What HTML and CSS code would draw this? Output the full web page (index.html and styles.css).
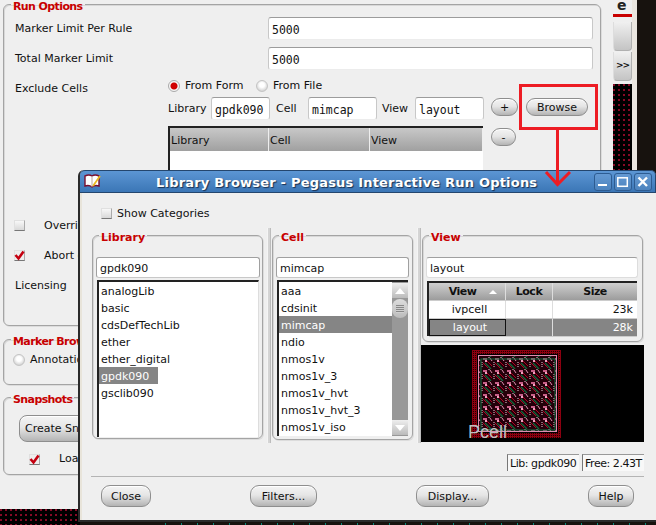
FILE: index.html
```html
<!DOCTYPE html>
<html lang="en">
<head>
<meta charset="utf-8">
<title>Library Browser</title>
<link rel="stylesheet" href="styles.css">
</head>
<body>
<div class="desktop">
  <div class="side-strip">
    <div class="side-title"><span class="side-e">e</span></div>
    <div class="side-btn side-btn-top"></div>
    <div class="side-btn">&gt;&gt;</div>
    <div class="dots side-dots"></div>
  </div>
  <div class="side-gap"></div>

  <div class="dots bottom-dots"></div>
  <div class="bottom-strip"></div>

  <main class="back-window">
    <fieldset class="group run-options">
      <legend>Run Options</legend>
      <div class="limit-row"><label class="limit-label">Marker Limit Per Rule</label><div class="input mono grow">5000</div></div>
      <div class="limit-row"><label class="limit-label">Total Marker Limit</label><div class="input mono grow">5000</div></div>
      <div class="exclude">
        <div class="exclude-label">Exclude Cells</div>
        <div class="exclude-body">
          <div class="radio-row">
            <span class="radio on"></span><span class="radio-text">From Form</span>
            <span class="radio"></span><span>From File</span>
          </div>
          <div class="lcv-row">
            <span class="lab-lib">Library</span><div class="input mono w-lib">gpdk090</div>
            <span class="lab-cell">Cell</span><div class="input mono w-cv">mimcap</div>
            <span class="lab-view">View</span><div class="input mono w-cv">layout</div>
            <button class="pill small plus">+</button>
            <button class="pill small browse">Browse</button>
          </div>
          <div class="table-row">
            <div class="ex-table">
              <div class="ex-head"><span class="c1">Library</span><span class="c2">Cell</span><span class="c3">View</span></div>
            </div>
            <button class="pill small minus">-</button>
          </div>
        </div>
      </div>
      <div class="opt-row"><span class="check"></span><span>Overriding</span></div>
      <div class="opt-row"><span class="check checked"><svg viewBox="0 0 11 11" width="11" height="11"><path d="M1.5 5 L4.5 8.5 L9.5 1.5" fill="none" stroke="#c40010" stroke-width="2.6"/></svg></span><span>Abort on</span></div>
      <div class="opt-row plain"><span>Licensing</span></div>
    </fieldset>
    <fieldset class="group marker">
      <legend>Marker Browser</legend>
      <div class="annot-row"><span class="radio"></span><span>Annotation</span></div>
    </fieldset>
    <fieldset class="group snapshots">
      <legend>Snapshots</legend>
      <button class="pill create">Create Snapshot</button>
      <div class="load-row"><span class="check checked"><svg viewBox="0 0 11 11" width="11" height="11"><path d="M1.5 5 L4.5 8.5 L9.5 1.5" fill="none" stroke="#c40010" stroke-width="2.6"/></svg></span><span>Load</span></div>
    </fieldset>
  </main>

  <section class="dialog">
    <header class="titlebar">
      <svg class="book" viewBox="0 0 17 15" width="17" height="15">
        <path d="M1 2 Q5 0 8 2 Q11 0 15 2 V12 Q11 10.500 8 13 Q5 10.500 1 12 Z" fill="#fff" stroke="#7a1030" stroke-width="1.400"/>
        <path d="M8 2 V13" stroke="#b8a8a0" stroke-width="1"/>
        <path d="M16 2 L9 12" stroke="#e8b820" stroke-width="1.800"/>
      </svg>
      <h1>Library Browser - Pegasus Interactive Run Options</h1>
      <div class="win-btns">
        <span class="win-btn"><svg viewBox="0 0 18 18" width="18" height="18"><rect x="4" y="11" width="9" height="2" fill="#fff"/></svg></span>
        <span class="win-btn"><svg viewBox="0 0 18 18" width="18" height="18"><rect x="3.800" y="4.800" width="9.500" height="8.500" fill="none" stroke="#fff" stroke-width="1.500"/></svg></span>
        <span class="win-btn"><svg viewBox="0 0 18 18" width="18" height="18"><path d="M4.500 4.500 L13 13 M13 4.500 L4.500 13" stroke="#fff" stroke-width="2.400"/></svg></span>
      </div>
    </header>
    <div class="dialog-body">
      <div class="show-cat"><span class="check"></span><span>Show Categories</span></div>
      <div class="panes">
        <fieldset class="group lib-pane">
          <legend>Library</legend>
          <div class="input pane-input lib-input">gpdk090</div>
          <ul class="list lib-list">
            <li>analogLib</li><li>basic</li><li>cdsDefTechLib</li><li>ether</li><li>ether_digital</li>
            <li class="sel short">gpdk090</li><li>gsclib090</li>
          </ul>
        </fieldset>
        <div class="sash"></div>
        <fieldset class="group cell-pane">
          <legend>Cell</legend>
          <div class="input pane-input cell-input">mimcap</div>
          <div class="scroll-list">
            <ul class="list cell-list">
              <li>aaa</li><li>cdsinit</li><li class="sel">mimcap</li><li>ndio</li><li>nmos1v</li>
              <li>nmos1v_3</li><li>nmos1v_hvt</li><li>nmos1v_hvt_3</li><li>nmos1v_iso</li>
            </ul>
            <div class="scrollbar">
              <span class="arrow up"></span>
              <span class="thumb"></span>
              <span class="arrow down"></span>
            </div>
          </div>
        </fieldset>
        <div class="sash sash2"></div>
        <div class="view-col">
          <fieldset class="group view-pane">
            <legend>View</legend>
            <div class="input pane-input view-input">layout</div>
            <div class="view-table">
              <div class="vt-row vt-head"><span class="vc1">View<i class="sort"></i></span><span class="vc2">Lock</span><span class="vc3">Size</span></div>
              <div class="vt-row"><span class="vc1">ivpcell</span><span class="vc2"></span><span class="vc3 size">23k</span></div>
              <div class="vt-row vt-sel"><span class="vc1 focus">layout</span><span class="vc2"></span><span class="vc3 size">28k</span></div>
            </div>
          </fieldset>
          <div class="preview">
            <svg viewBox="0 0 223 98" width="223" height="98">
              <defs>
                <pattern id="ring" width="2" height="2" patternUnits="userSpaceOnUse">
                  <rect width="2" height="2" fill="#8c0010"/><rect width="1" height="1" fill="#200"/>
                </pattern>
                <pattern id="cellp" width="12" height="12" patternUnits="userSpaceOnUse">
                  <rect width="12" height="12" fill="#24000a"/>
                  <rect x="2" y="1" width="4" height="2" fill="#c86088"/>
                  <rect x="4" y="3" width="2" height="2" fill="#f0a0c0"/>
                  <path d="M1 5 L1 11 M8 0 L8 2" stroke="#f0d0dc" stroke-width="1" stroke-dasharray="1 1"/>
                  <path d="M4 6 L10 12" stroke="#0d6a3a" stroke-width="1.300"/>
                  <path d="M6 4 L11 9 M2 6 L7 11" stroke="#b00020" stroke-width="1"/>
                  <path d="M9 1 L11 4" stroke="#e090b0" stroke-width="1"/>
                </pattern>
              </defs>
              <rect x="51" y="5" width="89" height="88" fill="url(#ring)"/>
              <rect x="56" y="9" width="81" height="79" fill="#000"/>
              <rect x="57.500" y="10.500" width="78" height="76" fill="url(#cellp)" stroke="#e08cb0" stroke-width="1"/>
              <rect x="60" y="14" width="74" height="71" fill="none" stroke="#0d7040" stroke-width="1"/>
            </svg>
            <span class="pcell">Pcell</span>
          </div>
        </div>
      </div>
      <div class="status-row">
        <span class="status st-lib">Lib: gpdk090</span>
        <span class="status st-free">Free: 2.43T</span>
      </div>
      <div class="actions">
        <button class="pill act a-close">Close</button>
        <button class="pill act a-filters">Filters...</button>
        <button class="pill act a-display">Display...</button>
        <button class="pill act a-help">Help</button>
      </div>
    </div>
  </section>

  <svg class="callout" width="656" height="525" viewBox="0 0 656 525">
    <rect x="520.500" y="85.500" width="76" height="43" fill="none" stroke="#ed1c24" stroke-width="3"/>
    <path d="M557.500 129 V184" fill="none" stroke="#ed1c24" stroke-width="3"/>
    <path d="M546 172 L557.500 184.500 L570 172" fill="none" stroke="#ed1c24" stroke-width="3"/>
  </svg>
</div>
</body>
</html>
```
FILE: styles.css
```css
* { box-sizing: border-box; }
html, body { margin: 0; padding: 0; }
body { width: 656px; height: 525px; overflow: hidden; }
.desktop {
  position: relative; width: 656px; height: 525px; overflow: hidden;
  background: #17120e;
  font: 11px/14px "DejaVu Sans", sans-serif; color: #111;
}
button { font: inherit; color: inherit; padding: 0; margin: 0; }
ul { list-style: none; margin: 0; padding: 0; }
.dots {
  background-color: #000;
  background-image: radial-gradient(circle at 1px 1px, #d0103a 0.6px, transparent 0.9px);
  background-size: 5px 5px;
}
.side-strip {
  position: absolute; left: 613px; top: 0; width: 19px; height: 170px;
  background: #efefef; display: flex; flex-direction: column;
}
.side-title { height: 17px; border-bottom: 3px solid #c80000; padding-left: 4px; background: #efefef; }
.side-e { display: block; font: bold 14px/11px "DejaVu Sans", sans-serif; color: #222; }
.side-btn {
  height: 29px; margin-bottom: 1px; text-align: center; line-height: 27px; font-size: 9px; font-weight: bold; letter-spacing: -1px;
  background: linear-gradient(#f0f0f0, #c4c4c4); border: 1px solid #b0b0b0; border-left-color: #ddd; border-top: 0;
  border-radius: 0 0 4px 4px; width: 19px;
}
.side-btn-top { margin-top: 5px; }
.side-dots { flex: 1; margin-top: 2px; }
.side-gap { position: absolute; left: 632px; top: 0; width: 5px; height: 170px; background: #eae6e0; }
.bottom-dots { position: absolute; left: 0; top: 509px; width: 80px; height: 16px; }
.bottom-strip {
  position: absolute; left: 165px; top: 523px; width: 491px; height: 2px;
  background: repeating-linear-gradient(to right, #0a8a7a 0 1px, transparent 1px 16px);
}

/* back window */
.back-window {
  position: absolute; left: 0; top: -3px; width: 613px; height: 512px;
  background: #efefef; padding-left: 3px;
  display: flex; flex-direction: column;
}
.group {
  margin: 0; padding: 0; min-width: 0;
  border: 1px solid #a4a4a4; border-radius: 6px;
  box-shadow: 1px 1px 0 #dcdcdc, inset 1px 1px 0 #d8d8d8;
}
.group legend {
  margin-left: 2px; padding: 4px 2px 0; line-height: 11px;
  font-weight: bold; color: #c80000; font-size: 11px;
}
.back-window .group legend { letter-spacing: -.6px; }
.run-options { width: 598px; height: 329px; padding: 5px 7px 0 11px; display: flex; flex-direction: column; }
.run-options legend { margin-left: -4px; }
.marker { width: 598px; height: 53px; margin-top: 6px; }
.marker legend { margin-left: 7px; }
.snapshots { width: 598px; height: 85px; margin-top: 5px; padding-left: 15px; }
.snapshots legend { margin-left: -8px; }
.limit-row { display: flex; align-items: flex-start; height: 23px; margin-bottom: 7px; }
.limit-label { width: 253px; line-height: 24px; }
.grow { flex: 1; }
.input {
  height: 23px; background: #fff; border: 1px solid #fff;
  border-top: 1px solid #9c9c9c; border-left-color: #c8c8c8; border-right-color: #c8c8c8; border-bottom-color: #ececec;
  border-radius: 3px; padding: 0 3px; line-height: 24px; white-space: nowrap; overflow: hidden;
}
.mono { font-family: "DejaVu Sans Mono", monospace; font-size: 11.500px; }
.exclude { display: flex; height: 134px; }
.exclude-label { width: 153px; padding-top: 5px; }
.exclude-body { flex: 1; display: flex; flex-direction: column; }
.radio-row { display: flex; align-items: center; height: 16px; margin-top: 1px; }
.radio {
  width: 12px; height: 12px; border-radius: 50%; flex: none; margin-right: 5px;
  background: radial-gradient(circle at 50% 40%, #fff 30%, #d0d0d0 80%); border: 1px solid #c4c4c4;
}
.radio.on { background: radial-gradient(circle, #d00000 0 3px, #f6f6f6 4px); border-color: #aaa; }
.radio-text { width: 71px; }
.lcv-row { display: flex; align-items: center; height: 23px; margin-top: 3px; }
.lab-lib { width: 43px; }
.lab-cell { width: 32px; margin-left: 6px; }
.lab-view { width: 33px; margin-left: 5px; }
.w-lib { width: 59px; }
.w-cv { width: 69px; }
.pill {
  display: block; border: 1px solid #8e8e8e; border-radius: 10px;
  background: linear-gradient(#f4f4f4 0, #e6e6e6 45%, #b4b4b4 100%);
  box-shadow: inset 0 1px 0 #fff; text-align: center;
}
.small { height: 18px; line-height: 15px; align-self: flex-start; }
.plus, .browse { margin-top: 1px; }
.plus { width: 27px; margin-left: 7px; }
.browse { width: 62px; margin-left: 8px; }
.table-row { display: flex; margin-top: 6px; }
.ex-table { width: 315px; height: 79px; background: #fff; border-top: 2px solid #222; border-left: 2px solid #222; }
.ex-head { display: flex; height: 23px; line-height: 25px; background: linear-gradient(#c8c8c8, #a0a0a0); }
.ex-head span { padding-left: 1px; border-right: 1px solid #eee; }
.c1 { width: 99px; } .c2 { width: 101px; } .c3 { width: 113px; }
.minus { width: 25px; margin: 2px 0 0 8px; }
.opt-row { display: flex; align-items: center; height: 30px; margin-left: -1px; }
.opt-row .check { margin: -2px 19px 0 0; }
.opt-row.plain { padding-left: 1px; }
.check {
  display: block; width: 11px; height: 11px; flex: none;
  background: linear-gradient(#f8f8f8, #d8d8d8); border: 1px solid #e0e0e0; border-bottom: 1px solid #777; border-right-color: #aaa;
}
.check.checked { background: #eee; }
.check svg { display: block; margin: -1px; }
.annot-row { display: flex; align-items: center; height: 26px; padding-left: 9px; white-space: nowrap; }
.create { width: 150px; height: 27px; margin-top: 10px; border-radius: 8px; text-align: left; padding-left: 5px; }
.load-row { display: flex; align-items: center; margin: 10px 0 0 10px; height: 14px; }
.load-row .check { margin-right: 19px; }

/* dialog */
.dialog {
  position: absolute; left: 78px; top: 170px; width: 578px; height: 352px;
  background: #efefef; border: 2px solid #2a2a2a; border-width: 0 0 2px 2px;
  border-radius: 6px 6px 0 0; display: flex; flex-direction: column;
}
.titlebar {
  height: 23px; flex: none; display: flex; align-items: center; position: relative;
  background: linear-gradient(#5c96d4, #3b76b6);
  border: 1px solid #24466e; border-left: 0; border-radius: 5px 5px 0 0; padding-left: 4px;
}
.book { flex: none; }
.titlebar h1 {
  flex: none; margin: 2px 0 0 55px; font: bold 13px/16px "DejaVu Sans", sans-serif; color: #fff;
  letter-spacing: 0.200px; text-shadow: 1px 1px 1px #1a3050; white-space: nowrap;
}
.win-btns { display: flex; gap: 2px; margin-left: auto; margin-right: 3px; }
.win-btn { display: block; width: 18px; height: 18px; border: 1px solid #2d5c92; border-radius: 3px; background: rgba(255,255,255,.08); overflow: hidden; }
.win-btn svg { display: block; margin: -1px; }
.dialog-body {
  flex: 1; display: flex; flex-direction: column; background: #efefef;
  border-left: 2px solid #e8e4da; padding-left: 10px;
}
.show-cat { display: flex; align-items: center; height: 35px; padding: 6px 0 0 9px; gap: 5px; }
.panes { display: flex; height: 214px; }
.lib-pane { width: 171px; height: 211px; padding: 14px 0 0 4px; }
.sash { width: 4px; height: 215px; margin: 0 1px 0 4px; background: #d4d4d4; border-left: 1px solid #f4f4f4; border-right: 1px solid #bcbcbc; }
.sash2 { margin-left: 4px; margin-right: 1px; }
.cell-pane { width: 141px; height: 212px; padding: 14px 0 0 4px; }
.view-col { width: 223px; display: flex; flex-direction: column; }
.view-pane { width: 221px; height: 114px; padding: 14px 0 0 4px; }
.pane-input { font-size: 11px; height: 21px; line-height: 21px; border: 1px solid #a0a0a0; border-bottom-color: #c8c8c8; margin-left: -1px; }
.lib-input { width: 164px; }
.cell-input { width: 133px; }
.view-input { width: 212px; border-color: #ddd; border-top-color: #a0a0a0; }
.list {
  background: #fff; border-top: 2px solid #222; border-left: 2px solid #222;
  line-height: 19px; white-space: nowrap;
}
.list li { height: 17px; padding-left: 2px; }
.sel { background: #858585; color: #fff; }
.lib-list { width: 162px; height: 157px; margin: 2px 0 0 0; border-right: 1px solid #ddd; }
.short { width: 59px; }
.scroll-list { display: flex; width: 131px; height: 156px; margin-top: 2px; border-top: 2px solid #222; border-left: 2px solid #222; }
.cell-list { border: 0; width: 113px; background: #fff; }
.scrollbar { width: 16px; background: #989898; display: flex; flex-direction: column; padding-top: 1px; }
.arrow { height: 15px; background: linear-gradient(#eee, #bbb); display: flex; align-items: center; justify-content: center; flex: none; }
.arrow::after { content: ""; border-left: 5px solid transparent; border-right: 5px solid transparent; }
.arrow.up::after { border-bottom: 6px solid #fff; }
.arrow.down::after { border-top: 6px solid #fff; }
.arrow.down { margin-top: auto; margin-bottom: 1px; }
.thumb {
  height: 19px; border-radius: 8px; margin-top: 1px; flex: none;
  background: repeating-linear-gradient(#888 0 1px, #d0d0d0 1px 2px) center/8px 8px no-repeat, linear-gradient(#ddd, #bbb);
}
.view-table { width: 210px; height: 55px; margin: 3px 0 0 0; background: #fff; border: 2px solid #222; border-width: 2px 0 0 2px; }
.vt-row { display: flex; height: 18px; line-height: 17px; border-bottom: 1px solid #ccc; }
.vt-head { background: linear-gradient(#cfcfcf, #9c9c9c); font-weight: bold; letter-spacing: -.5px; }
.vc1 { width: 77px; text-align: center; border-right: 1px solid #ddd; position: relative; padding-left: 5px; }
.vt-head .vc1 { padding: 0 9px 0 0; }
.vc2 { width: 47px; text-align: center; border-right: 1px solid #ddd; }
.vc3 { flex: 1; text-align: center; }
.size { text-align: right; padding-right: 4px; }
.vt-sel { background: #858585; color: #fff; }
.focus { border: 1px solid #111; line-height: 15px; }
.sort { position: absolute; right: 8px; top: 7px; border-left: 4px solid transparent; border-right: 4px solid transparent; border-bottom: 4px solid #fff; }
.preview { position: relative; width: 223px; height: 98px; margin-top: 3px; background: #000; overflow: hidden; margin-left: -1px; }
.preview svg { display: block; }
.pcell { position: absolute; left: 47px; bottom: -1px; font: 18px/22px "Liberation Sans", sans-serif; color: #c0c0c0; }
.status-row { display: flex; justify-content: flex-end; height: 34px; padding: 12px 12px 0 0; gap: 3px; }
.status { height: 17px; line-height: 17px; background: #f8f8f8; border-left: 1px solid #777; border-top: 1px solid #999; padding-left: 2px; white-space: nowrap; letter-spacing: -.45px; }
.st-lib { width: 72px; }
.st-free { width: 62px; }
.actions {
  display: flex; justify-content: space-between; align-items: flex-start;
  margin: 0 12px 0 -1px; border-top: 1px solid #b4b4b4; padding: 8px 10px 0 10px; height: 44px;
}
.act { height: 22px; line-height: 22px; border-radius: 9px; }
.a-close { width: 50px; } .a-filters { width: 67px; } .a-display { width: 73px; } .a-help { width: 46px; }
.callout { position: absolute; left: 0; top: 0; pointer-events: none; }
```
